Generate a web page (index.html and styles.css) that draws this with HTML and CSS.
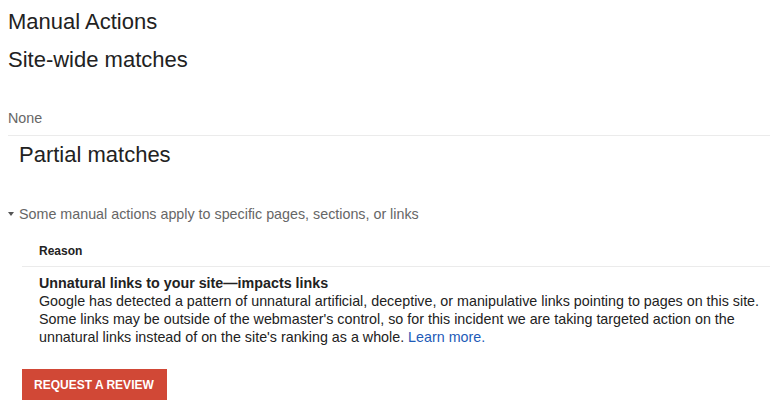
FILE: index.html
```html
<!DOCTYPE html>
<html>
<head>
<meta charset="utf-8">
<link rel="stylesheet" href="styles.css">
</head>
<body>
<div class="page">
  <h1 class="title">Manual Actions</h1>
  <h2 class="section-title">Site-wide matches</h2>
  <div class="none">None</div>
  <div class="divider"></div>
  <h2 class="section-title partial">Partial matches</h2>
  <div class="toggle"><span class="tri"></span>Some manual actions apply to specific pages, sections, or links</div>
  <div class="table">
    <div class="th">Reason</div>
    <div class="row">
      <div class="reason-title">Unnatural links to your site—impacts links</div>
      <p class="desc">Google has detected a pattern of unnatural artificial, deceptive, or manipulative links pointing to pages on this site. Some links may be outside of the webmaster's control, so for this incident we are taking targeted action on the unnatural links instead of on the site's ranking as a whole. <a class="link" href="#">Learn more.</a></p>
    </div>
  </div>
  <button class="btn">REQUEST A REVIEW</button>
</div>
</body>
</html>
```
FILE: styles.css
```css
* { box-sizing: border-box; }
html, body { margin: 0; padding: 0; background: #fff; }
body { font-family: "Liberation Sans", Arial, sans-serif; color: #222; }
.page { padding: 8px 0 0 8px; }
.title, .section-title { font-weight: normal; font-size: 22px; line-height: 28px; margin: 0; color: #222; }
.title { margin-bottom: 10px; }
.none { margin-top: 35px; font-size: 14.3px; color: #666; line-height: 18px; }
.divider { height: 1px; background: #ebebeb; margin-top: 8px; }
.partial { margin: 5px 0 0 11px; }
.toggle { margin-top: 36px; font-size: 14.3px; color: #666; line-height: 18px; display: flex; align-items: center; }
.tri { width: 0; height: 0; border-left: 3px solid transparent; border-right: 3px solid transparent; border-top: 4px solid #555; margin: 0 5px 0 0; }
.table { margin: 21px 0 0 14px; }
.th { font-size: 12px; font-weight: bold; color: #222; padding: 0 0 7px 17px; line-height: 15px; border-bottom: 1px solid #ebebeb; }
.row { padding: 7px 0 0 17px; }
.reason-title { font-size: 14.3px; font-weight: bold; line-height: 18px; color: #222; }
.desc { margin: 0; font-size: 14.3px; line-height: 18px; color: #222; }
.link { color: #1e5bb8; text-decoration: none; }
.btn { display: block; margin: 23px 0 0 14px; background: #d14836; color: #fff; border: 0; font-family: "Liberation Sans", Arial, sans-serif; font-weight: bold; font-size: 12px; height: 31px; padding: 0 12px; width: 145px; text-align: left; }
```
